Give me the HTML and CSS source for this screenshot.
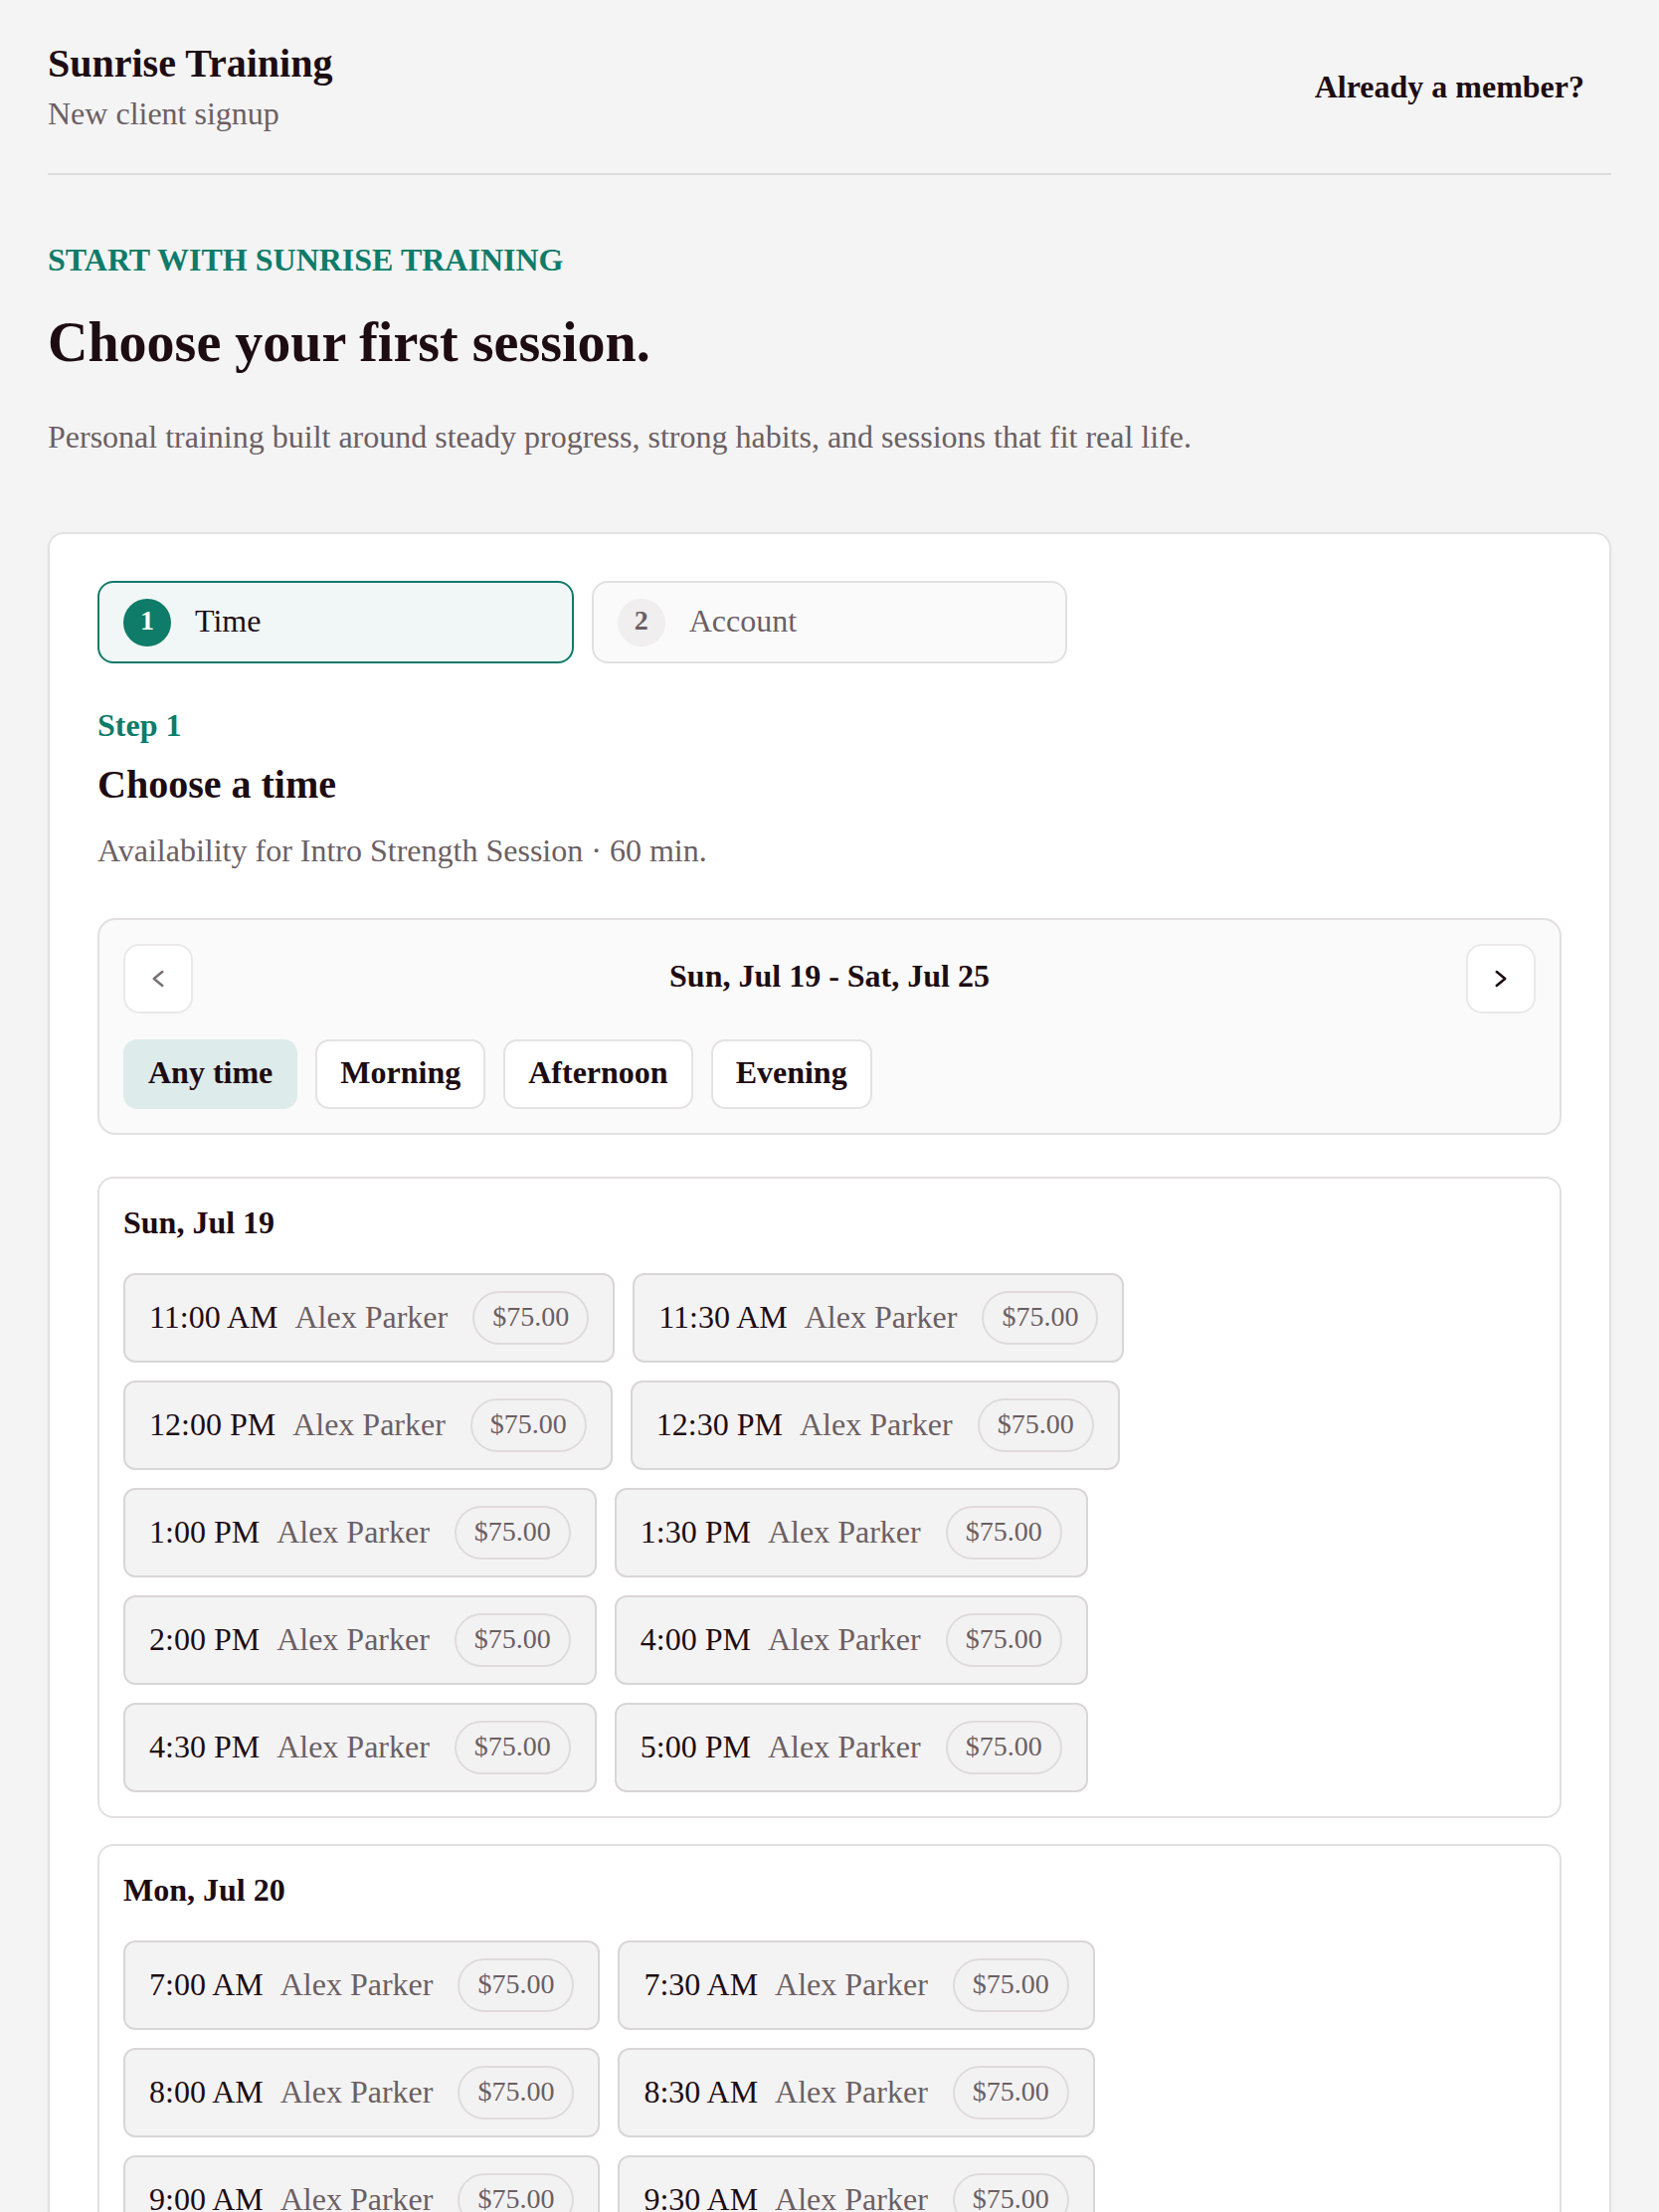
FILE: index.html
```html
<!DOCTYPE html>
<html lang="en">
<head>
<meta charset="utf-8">
<title>Sunrise Training – New client signup</title>
<link rel="stylesheet" href="styles.css">
</head>
<body>
<div class="page">
  <header class="site-header">
    <div class="brand">
      <div class="brand-name">Sunrise Training</div>
      <div class="brand-sub">New client signup</div>
    </div>
    <a class="member-link" href="#">Already a member?</a>
  </header>

  <main class="main">
    <p class="eyebrow">START WITH SUNRISE TRAINING</p>
    <h1 class="hero-title">Choose your first session.</h1>
    <p class="hero-text">Personal training built around steady progress, strong habits, and sessions that fit real life.</p>

    <section class="card">
      <ol class="stepper">
        <li class="step step-active"><span class="step-num">1</span><span class="step-label">Time</span></li>
        <li class="step"><span class="step-num">2</span><span class="step-label">Account</span></li>
      </ol>

      <p class="step-kicker">Step 1</p>
      <h2 class="step-title">Choose a time</h2>
      <p class="step-desc">Availability for Intro Strength Session · 60 min.</p>

      <div class="week-panel">
        <div class="week-nav">
          <button class="nav-btn nav-prev" type="button" aria-label="Previous week">
            <svg class="chev" width="16" height="22" viewBox="0 0 16 22"><polyline points="12.25,4 3.75,11 12.25,18"/></svg>
          </button>
          <div class="week-title">Sun, Jul 19 - Sat, Jul 25</div>
          <button class="nav-btn nav-next" type="button" aria-label="Next week">
            <svg class="chev" width="16" height="22" viewBox="0 0 16 22"><polyline points="3.75,4 12.25,11 3.75,18"/></svg>
          </button>
        </div>
        <div class="filters">
          <button class="chip chip-active" type="button">Any time</button>
          <button class="chip" type="button">Morning</button>
          <button class="chip" type="button">Afternoon</button>
          <button class="chip" type="button">Evening</button>
        </div>
      </div>

      <div class="days">
        <section class="day">
          <h3 class="day-title">Sun, Jul 19</h3>
          <div class="slots">
            <button class="slot" type="button"><span class="slot-time">11:00 AM</span><span class="slot-coach">Alex Parker</span><span class="slot-price">$75.00</span></button>
            <button class="slot" type="button"><span class="slot-time">11:30 AM</span><span class="slot-coach">Alex Parker</span><span class="slot-price">$75.00</span></button>
            <button class="slot" type="button"><span class="slot-time">12:00 PM</span><span class="slot-coach">Alex Parker</span><span class="slot-price">$75.00</span></button>
            <button class="slot" type="button"><span class="slot-time">12:30 PM</span><span class="slot-coach">Alex Parker</span><span class="slot-price">$75.00</span></button>
            <button class="slot" type="button"><span class="slot-time">1:00 PM</span><span class="slot-coach">Alex Parker</span><span class="slot-price">$75.00</span></button>
            <button class="slot" type="button"><span class="slot-time">1:30 PM</span><span class="slot-coach">Alex Parker</span><span class="slot-price">$75.00</span></button>
            <button class="slot" type="button"><span class="slot-time">2:00 PM</span><span class="slot-coach">Alex Parker</span><span class="slot-price">$75.00</span></button>
            <button class="slot" type="button"><span class="slot-time">4:00 PM</span><span class="slot-coach">Alex Parker</span><span class="slot-price">$75.00</span></button>
            <button class="slot" type="button"><span class="slot-time">4:30 PM</span><span class="slot-coach">Alex Parker</span><span class="slot-price">$75.00</span></button>
            <button class="slot" type="button"><span class="slot-time">5:00 PM</span><span class="slot-coach">Alex Parker</span><span class="slot-price">$75.00</span></button>
          </div>
        </section>

        <section class="day">
          <h3 class="day-title">Mon, Jul 20</h3>
          <div class="slots">
            <button class="slot" type="button"><span class="slot-time">7:00 AM</span><span class="slot-coach">Alex Parker</span><span class="slot-price">$75.00</span></button>
            <button class="slot" type="button"><span class="slot-time">7:30 AM</span><span class="slot-coach">Alex Parker</span><span class="slot-price">$75.00</span></button>
            <button class="slot" type="button"><span class="slot-time">8:00 AM</span><span class="slot-coach">Alex Parker</span><span class="slot-price">$75.00</span></button>
            <button class="slot" type="button"><span class="slot-time">8:30 AM</span><span class="slot-coach">Alex Parker</span><span class="slot-price">$75.00</span></button>
            <button class="slot" type="button"><span class="slot-time">9:00 AM</span><span class="slot-coach">Alex Parker</span><span class="slot-price">$75.00</span></button>
            <button class="slot" type="button"><span class="slot-time">9:30 AM</span><span class="slot-coach">Alex Parker</span><span class="slot-price">$75.00</span></button>
            <button class="slot" type="button"><span class="slot-time">10:00 AM</span><span class="slot-coach">Alex Parker</span><span class="slot-price">$75.00</span></button>
            <button class="slot" type="button"><span class="slot-time">10:30 AM</span><span class="slot-coach">Alex Parker</span><span class="slot-price">$75.00</span></button>
          </div>
        </section>
      </div>
    </section>
  </main>
</div>
</body>
</html>
```

FILE: styles.css
```css
* {
  box-sizing: border-box;
}

body {
  margin: 0;
  background: #f4f4f4;
  font-family: "Liberation Serif", "Times New Roman", serif;
  color: #1d0c12;
}

.page {
  padding: 0 48px;
}

/* Header */
.site-header {
  display: flex;
  justify-content: space-between;
  align-items: center;
  padding: 41px 0 41px;
  border-bottom: 2px solid #dcdcdc;
}

.brand-name {
  font-size: 40px;
  line-height: 46px;
  font-weight: 700;
}

.brand-sub {
  margin-top: 9px;
  font-size: 32px;
  line-height: 37px;
  color: #6b5f63;
}

.member-link {
  font-size: 32px;
  line-height: 37px;
  font-weight: 700;
  color: #1d0c12;
  text-decoration: none;
  padding: 12px 27px;
}

/* Hero */
.main {
  padding: 67px 0 80px;
}

.eyebrow {
  margin: 0;
  font-size: 32px;
  line-height: 37px;
  font-weight: 700;
  color: #0f7b69;
}

.hero-title {
  margin: 32px 0 0;
  font-size: 56px;
  line-height: 64px;
  font-weight: 700;
}

.hero-text {
  margin: 45px 0 0;
  font-size: 32px;
  line-height: 37px;
  color: #6b5f63;
}

/* Card */
.card {
  margin-top: 77px;
  background: #fff;
  border: 2px solid #e3e1e1;
  border-radius: 16px;
  padding: 47px 48px 48px;
  box-shadow: 0 1px 3px rgba(0, 0, 0, 0.04);
}

.stepper {
  list-style: none;
  margin: 0;
  padding: 0;
  display: grid;
  grid-template-columns: repeat(3, 1fr);
  gap: 18px;
}

.step {
  display: flex;
  align-items: center;
  gap: 24px;
  padding: 15.5px 24px;
  border: 2px solid #e3e0e1;
  border-radius: 16px;
  background: #fafafa;
}

.step-num {
  width: 48px;
  height: 48px;
  padding-bottom: 3px;
  border-radius: 50%;
  display: flex;
  align-items: center;
  justify-content: center;
  font-size: 28px;
  font-weight: 700;
  background: #f0eeee;
  color: #6b5f63;
}

.step-label {
  padding-bottom: 3px;
  font-size: 32px;
  line-height: 37px;
  color: #6b5f63;
}

.step-active {
  border-color: #0f7b69;
  background: #f1f7f6;
}

.step-active .step-num {
  background: #0f7b69;
  color: #fff;
}

.step-active .step-label {
  color: #1d0c12;
}

.step-kicker {
  margin: 44px 0 0;
  font-size: 32px;
  line-height: 37px;
  font-weight: 700;
  color: #0f7b69;
}

.step-title {
  margin: 18px 0 0;
  font-size: 40px;
  line-height: 46px;
  font-weight: 700;
}

.step-desc {
  margin: 25px 0 0;
  font-size: 32px;
  line-height: 37px;
  color: #6b5f63;
}

/* Week panel */
.week-panel {
  margin-top: 49px;
  border: 2px solid #e3e0e1;
  border-radius: 18px;
  background: #fafafa;
  padding: 24px;
}

.week-nav {
  display: flex;
  align-items: center;
  justify-content: space-between;
}

.nav-btn {
  width: 70px;
  height: 70px;
  padding: 0;
  border: 2px solid #ebe8e9;
  border-radius: 16px;
  background: #fff;
  display: flex;
  align-items: center;
  justify-content: center;
  cursor: pointer;
}

.chev polyline {
  fill: none;
  stroke-width: 2.5;
  stroke-linecap: round;
  stroke-linejoin: round;
}

.nav-prev .chev polyline {
  stroke: #7b6f73;
}

.nav-next .chev polyline {
  stroke: #1d0c12;
}

.week-title {
  padding-bottom: 6px;
  font-size: 32px;
  line-height: 37px;
  font-weight: 700;
}

.filters {
  display: flex;
  gap: 18px;
  margin-top: 26px;
}

.chip {
  font-family: inherit;
  font-size: 32px;
  line-height: 38px;
  font-weight: 700;
  color: #1d0c12;
  padding: 12px 23px 16px;
  border: 2px solid #e5e2e3;
  border-radius: 14px;
  background: #fff;
  cursor: pointer;
}

.chip-active {
  background: #ddebea;
  border-color: #ddebea;
}

/* Days */
.days {
  margin-top: 42px;
  display: flex;
  flex-direction: column;
  gap: 26px;
}

.day {
  background: #fff;
  border: 2px solid #e3e0e1;
  border-radius: 16px;
  padding: 24px;
}

.day-title {
  margin: 0 0 31px;
  font-size: 32px;
  line-height: 40px;
  font-weight: 700;
}

.slots {
  display: flex;
  flex-wrap: wrap;
  gap: 18px;
}

.slot {
  display: flex;
  align-items: center;
  gap: 17px;
  padding: 16px 24px;
  border: 2px solid #d9d6d7;
  border-radius: 12px;
  background: #f4f3f3;
  font-family: inherit;
  cursor: pointer;
}

.slot-time {
  padding-bottom: 2px;
  font-size: 32px;
  line-height: 37px;
  color: #1d0c12;
}

.slot-coach {
  padding-bottom: 2px;
  font-size: 32px;
  line-height: 37px;
  color: #6b5f63;
}

.slot-price {
  margin-left: 8px;
  font-size: 28px;
  line-height: 32px;
  color: #6b5f63;
  padding: 8px 18px 10px;
  border: 2px solid #dfdbdc;
  border-radius: 999px;
  background: #f3f2f2;
}
```
